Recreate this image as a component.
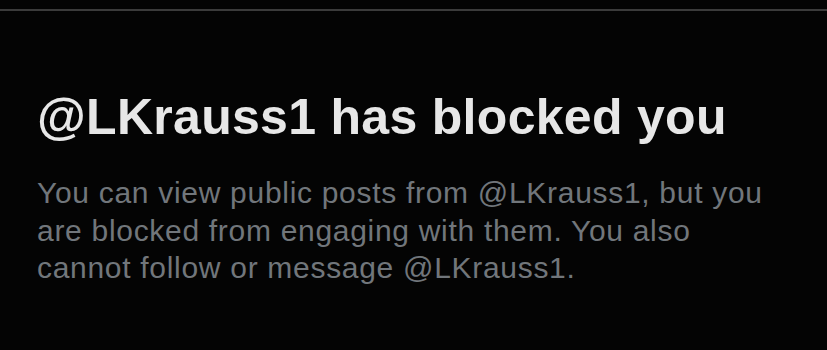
import React from 'react';

export default function App() {
  return (
    <div className="w-[827px] h-[350px] bg-[#040404] overflow-hidden" style={{ fontFamily: '"Liberation Sans", Arial, sans-serif' }}>
      <div className="pt-[9px]">
        <div className="h-[2px] bg-[#3b3b3b]" />
      </div>
      <div className="pl-[37px] pt-[80px]">
        <h1 className="text-[50px] leading-[52px] font-bold text-[#e7e7e7] tracking-[0.3px]">@LKrauss1 has blocked you</h1>
        <p className="mt-[31px] text-[30px] leading-[37.5px] text-[#71767b] tracking-[0.7px]">
          You can view public posts from @LKrauss1, but you
          <br />
          are blocked from engaging with them. You also
          <br />
          cannot follow or message @LKrauss1.
        </p>
      </div>
    </div>
  );
}
